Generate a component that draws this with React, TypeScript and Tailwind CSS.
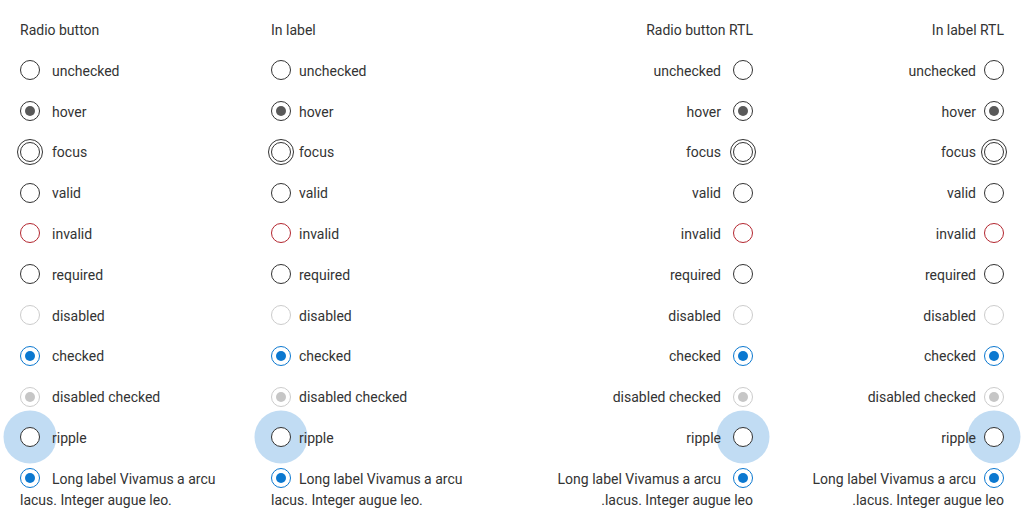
import React from "react";

type Kind =
  | "unchecked"
  | "hover"
  | "focus"
  | "valid"
  | "invalid"
  | "required"
  | "disabled"
  | "checked"
  | "disabledChecked"
  | "ripple";

function Radio({ kind }: { kind: Kind }) {
  let ring = "border border-[#333333]";
  let dot: string | null = null;
  let extra = "";
  if (kind === "hover") {
    dot = "bg-[#595959]";
  } else if (kind === "focus") {
    extra = "outline outline-1 outline-[#333333] outline-offset-2";
  } else if (kind === "invalid") {
    ring = "border border-[#b3262f]";
  } else if (kind === "disabled") {
    ring = "border border-[#cccccc]";
  } else if (kind === "checked") {
    ring = "border-[1.5px] border-[#0b78d0]";
    dot = "bg-[#0b78d0]";
  } else if (kind === "disabledChecked") {
    ring = "border border-[#cccccc]";
    dot = "bg-[#c6c6c6]";
  }
  return (
    <span className="relative inline-flex w-5 h-5 shrink-0 align-middle">
      {kind === "ripple" && (
        <span className="absolute left-1/2 top-1/2 w-[53px] h-[53px] -translate-x-1/2 -translate-y-1/2 rounded-full bg-[#c1dcf3]" />
      )}
      <span
        className={`relative flex items-center justify-center w-5 h-5 rounded-full bg-white box-border ${ring} ${extra}`}
      >
        {dot && <span className={`w-[10px] h-[10px] rounded-full ${dot}`} />}
      </span>
    </span>
  );
}

const rows: { kind: Kind; label: string }[] = [
  { kind: "unchecked", label: "unchecked" },
  { kind: "hover", label: "hover" },
  { kind: "focus", label: "focus" },
  { kind: "valid", label: "valid" },
  { kind: "invalid", label: "invalid" },
  { kind: "required", label: "required" },
  { kind: "disabled", label: "disabled" },
  { kind: "checked", label: "checked" },
  { kind: "disabledChecked", label: "disabled checked" },
  { kind: "ripple", label: "ripple" },
];

function Column({ title, rtl, wide }: { title: string; rtl: boolean; wide: boolean }) {
  const gap = wide ? "gap-3" : "gap-2";
  const me = wide ? "me-3" : "me-2";
  return (
    <div dir={rtl ? "rtl" : "ltr"} className="flex flex-col gap-[19.8px]">
      <div className="h-[21px] leading-[21px] translate-y-[1px]">{title}</div>
      {rows.map((r) => (
        <div key={r.label} className={`flex items-center h-[21px] ${gap}`}>
          <Radio kind={r.kind} />
          <span className="relative leading-[21px] translate-y-[1px]">{r.label}</span>
        </div>
      ))}
      <div className="leading-[21px] translate-y-[1px]">
        <span className={`inline-flex align-middle -mt-[4px] ${me}`}>
          <Radio kind="checked" />
        </span>
        Long label Vivamus a arcu lacus. Integer augue leo.
      </div>
    </div>
  );
}

export default function App() {
  return (
    <div
      className="w-[1024px] h-[529px] bg-white text-[14px] text-[#333333] overflow-hidden"
      style={{ fontFamily: "Roboto, 'Liberation Sans', sans-serif" }}
    >
      <div className="grid grid-cols-4 gap-5 px-5 pt-[19px]">
        <Column title="Radio button" rtl={false} wide={true} />
        <Column title="In label" rtl={false} wide={false} />
        <Column title="Radio button RTL" rtl={true} wide={true} />
        <Column title="In label RTL" rtl={true} wide={false} />
      </div>
    </div>
  );
}
